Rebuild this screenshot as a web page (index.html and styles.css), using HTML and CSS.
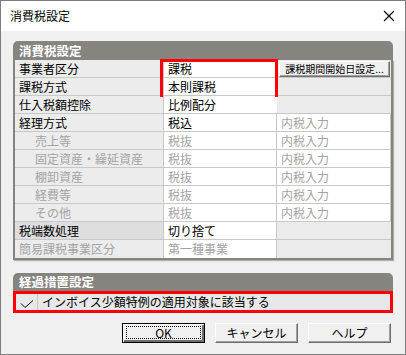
FILE: index.html
```html
<!DOCTYPE html>
<html lang="ja">
  <head>
    <meta charset="UTF-8" />
    <meta name="viewport" content="width=device-width, initial-scale=1.0" />
    <title>消費税設定</title>
    <link rel="stylesheet" href="styles.css">
  </head>
  <body>
    <div class="dialog">
      <div class="titlebar">
        <span class="title">消費税設定</span>
        <svg class="close" width="12" height="12" viewBox="0 0 12 12">
          <path d="M1 1 L11 11 M11 1 L1 11" stroke="#000" stroke-width="1.1" fill="none" />
        </svg>
      </div>

      <div class="content">
        <section class="group">
          <div class="group-head">消費税設定</div>
          <div class="grid">
            <div class="lbl">事業者区分</div>
            <div class="val">課税</div>
            <div class="fill span2"><button class="small-btn" type="button">課税期間開始日設定...</button></div>

            <div class="lbl">課税方式</div>
            <div class="val">本則課税</div>
            <div class="fill span2"></div>

            <div class="lbl">仕入税額控除</div>
            <div class="val">比例配分</div>
            <div class="fill span2"></div>

            <div class="lbl">経理方式</div>
            <div class="val">税込</div>
            <div class="val off">内税入力</div>
            <div class="val"></div>

            <div class="lbl sub off">売上等</div>
            <div class="val off">税抜</div>
            <div class="val off">内税入力</div>
            <div class="val"></div>

            <div class="lbl sub off">固定資産・繰延資産</div>
            <div class="val off">税抜</div>
            <div class="val off">内税入力</div>
            <div class="val"></div>

            <div class="lbl sub off">棚卸資産</div>
            <div class="val off">税抜</div>
            <div class="val off">内税入力</div>
            <div class="val"></div>

            <div class="lbl sub off">経費等</div>
            <div class="val off">税抜</div>
            <div class="val off">内税入力</div>
            <div class="val"></div>

            <div class="lbl sub off">その他</div>
            <div class="val off">税抜</div>
            <div class="val off">内税入力</div>
            <div class="val"></div>

            <div class="lbl current">税端数処理</div>
            <div class="val">切り捨て</div>
            <div class="fill span2"></div>

            <div class="lbl off">簡易課税事業区分</div>
            <div class="val off">第一種事業</div>
            <div class="fill span2 last"></div>

            <div class="mark"></div>
          </div>
        </section>

        <section class="group group-2">
          <div class="group-head">経過措置設定</div>
          <div class="check-row">
            <span class="check">
              <svg width="14" height="10" viewBox="0 0 14 10">
                <path d="M1 4.5 L5 8.5 L13 1.5" stroke="#000" stroke-width="1" fill="none" />
              </svg>
            </span>
            <span class="check-text">インボイス少額特例の適用対象に該当する</span>
          </div>
        </section>

        <div class="buttons">
          <button class="btn default" type="button"><span class="focus">OK</span></button>
          <button class="btn" type="button">キャンセル</button>
          <button class="btn" type="button">ヘルプ</button>
        </div>
      </div>
    </div>
  </body>
</html>
```

FILE: styles.css
```css
* {
  box-sizing: border-box;
}

body {
  margin: 0;
  background-color: #6b6a5a;
  font-family: "Noto Sans CJK JP", "Liberation Sans", sans-serif;
  font-size: 12px;
  color: #000;
}

.dialog {
  width: 406px;
  height: 355px;
  border: 1px solid #7e7e7e;
  background-color: #f0f0f0;
}

.titlebar {
  height: 30px;
  background-color: #fff;
  display: flex;
  align-items: center;
  justify-content: space-between;
  padding: 0 10px 0 9px;
}

.title {
  font-size: 12px;
  line-height: 14px;
}

.close {
  display: block;
}

.content {
  padding: 10px 11px 0 12px;
}

.group {
  width: 380px;
}

.group-head {
  height: 19px;
  background-color: #86847f;
  border-radius: 5px 5px 0 0;
  color: #fff;
  font-weight: bold;
  font-size: 12.5px;
  line-height: 19px;
  padding-left: 6px;
}

.grid {
  position: relative;
  display: grid;
  grid-template-columns: 149px 113px 76px 38px;
  grid-auto-rows: 18px;
  border: 2px solid #86847f;
  border-top: none;
  box-shadow: 1px 1px 1px #b0b0b0;
  background-color: #fff;
}

.lbl,
.val,
.fill {
  border-right: 1px solid #c8c8c8;
  border-bottom: 1px solid #c8c8c8;
  line-height: 17px;
  white-space: nowrap;
  overflow: hidden;
}

.lbl {
  background-color: #ececec;
  padding-left: 4px;
}

.lbl.sub {
  padding-left: 20px;
}

.lbl.current {
  background-color: #dedede;
}

.val {
  background-color: #fff;
  padding-left: 4px;
}

.fill {
  background-color: #ebebeb;
  border-right: none;
}

.span2 {
  grid-column: span 2;
}

.grid > .val:nth-child(4n) {
  border-right: none;
}

.grid > div:nth-last-child(-n+4) {
  border-bottom: none;
}

.off {
  color: #a3a3a3;
}

.small-btn {
  display: block;
  margin: 1px 0 0 2px;
  width: 111px;
  height: 16px;
  padding: 0;
  font-family: inherit;
  font-size: 10px;
  line-height: 14px;
  white-space: nowrap;
  background-color: #f0f0f0;
  border: 1px solid;
  border-color: #fff #6e6e6e #6e6e6e #fff;
  box-shadow: inset -1px -1px 0 #a0a0a0;
  color: #000;
}

.mark {
  position: absolute;
  left: 145px;
  top: -1px;
  width: 118px;
  height: 38px;
  border: 3px solid #ff0000;
}

.group-2 {
  margin-top: 13px;
}

.group-2 .group-head {
  height: 18px;
  line-height: 18px;
}

.check-row {
  display: flex;
  align-items: stretch;
  height: 22px;
  border: 3px solid #ff0000;
  background-color: #e8e8e8;
}

.check {
  width: 22px;
  border-right: 1px solid #c8c8c8;
  display: flex;
  align-items: flex-end;
  justify-content: center;
  padding-bottom: 1px;
}

.check-text {
  padding-left: 4px;
  line-height: 16px;
}

.buttons {
  display: flex;
  justify-content: flex-end;
  gap: 10px;
  margin-top: 10px;
  padding-right: 3px;
}

.btn {
  width: 83px;
  height: 20px;
  padding: 0;
  font-family: inherit;
  font-size: 12px;
  line-height: 16px;
  color: #000;
  background-color: #f0f0f0;
  border: 1px solid;
  border-color: #fff #6e6e6e #6e6e6e #fff;
  box-shadow: inset -1px -1px 0 #a0a0a0;
}

.btn.default {
  border: 1px solid #000;
  box-shadow: inset 1px 1px 0 #fff, inset -2px -2px 0 #6e6e6e;
  padding: 2px 3px 3px 3px;
}

.focus {
  display: block;
  height: 13px;
  line-height: 11px;
  border: 1px dotted #000;
}
```
